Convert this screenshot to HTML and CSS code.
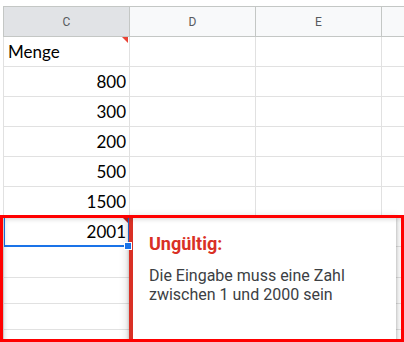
FILE: index.html
```html
<!DOCTYPE html>
<html lang="de">
<head>
    <meta charset="UTF-8">
    <meta name="viewport" content="width=device-width, initial-scale=1.0">
    <title>Datenvalidierung</title>
    <link rel="stylesheet" href="styles.css">
</head>
<body>
    <div class="sheet">
        <div class="row head">
            <div class="cell active">C</div>
            <div class="cell">D</div>
            <div class="cell">E</div>
            <div class="cell"></div>
        </div>
        <div class="row">
            <div class="cell text flag">Menge</div>
            <div class="cell"></div><div class="cell"></div><div class="cell"></div>
        </div>
        <div class="row">
            <div class="cell num">800</div>
            <div class="cell"></div><div class="cell"></div><div class="cell"></div>
        </div>
        <div class="row">
            <div class="cell num">300</div>
            <div class="cell"></div><div class="cell"></div><div class="cell"></div>
        </div>
        <div class="row">
            <div class="cell num">200</div>
            <div class="cell"></div><div class="cell"></div><div class="cell"></div>
        </div>
        <div class="row">
            <div class="cell num">500</div>
            <div class="cell"></div><div class="cell"></div><div class="cell"></div>
        </div>
        <div class="row">
            <div class="cell num">1500</div>
            <div class="cell"></div><div class="cell"></div><div class="cell"></div>
        </div>
        <div class="row">
            <div class="cell num flag invalid selected">2001</div>
            <div class="cell"></div><div class="cell"></div><div class="cell"></div>
        </div>
        <div class="row tall">
            <div class="cell"></div><div class="cell"></div><div class="cell"></div><div class="cell"></div>
        </div>
        <div class="row short">
            <div class="cell"></div><div class="cell"></div><div class="cell"></div><div class="cell"></div>
        </div>
        <div class="row short">
            <div class="cell"></div><div class="cell"></div><div class="cell"></div><div class="cell"></div>
        </div>
        <div class="row short">
            <div class="cell"></div><div class="cell"></div><div class="cell"></div><div class="cell"></div>
        </div>

        <div class="popup">
            <div class="popup-title">Ungültig:</div>
            <div class="popup-text">Die Eingabe muss eine Zahl<br>zwischen 1 und 2000 sein</div>
        </div>
        <div class="mark"></div>
    </div>
</body>
</html>
```

FILE: styles.css
```css
* {
    box-sizing: border-box;
}
body {
    margin: 0;
    background: #fff;
    overflow: hidden;
}
.sheet {
    position: relative;
    padding: 6px 0 0 3px;
    width: 404px;
    height: 342px;
    overflow: hidden;
}
.row {
    display: flex;
    height: 30px;
    border-left: 1px solid #e1e1e1;
    border-bottom: 1px solid #e1e1e1;
}
.row.tall {
    height: 31px;
}
.row.short {
    height: 26px;
}
.cell {
    flex: none;
    width: 126px;
    height: 100%;
    border-right: 1px solid #e1e1e1;
    font-family: Lato, "Liberation Sans", sans-serif;
    font-size: 17px;
    line-height: 20px;
    color: #000;
}
.head {
    height: 31px;
    background: #f8f9fa;
    border-top: 1px solid #c4c7c5;
    border-bottom: 1px solid #c4c7c5;
    border-left-color: #c4c7c5;
}
.head .cell {
    display: flex;
    align-items: center;
    justify-content: center;
    border-right-color: #c4c7c5;
    font-family: Roboto, "Liberation Sans", sans-serif;
    font-size: 12px;
    color: #575a5e;
}
.head .active {
    background: #e1e3e6;
}
.text, .num {
    display: flex;
    align-items: flex-end;
    padding: 0 3px 4px 4px;
}
.num {
    justify-content: flex-end;
}
.flag {
    position: relative;
}
.flag::after {
    content: "";
    position: absolute;
    top: 0;
    right: 1px;
    border-left: 6px solid transparent;
    border-top: 6px solid #ea4335;
}
.invalid::after {
    border-top-color: #c5221f;
}
.selected::before {
    content: "";
    position: absolute;
    top: -1px;
    left: 0;
    right: -1px;
    bottom: -1px;
    border: 2px solid #1a73e8;
    border-left-width: 1px;
}
.popup {
    position: absolute;
    left: 129px;
    top: 217px;
    width: 267px;
    height: 140px;
    background: #fff;
    border-left: 4px solid #d93025;
    padding: 16px 16px 0 16px;
    box-shadow: 0 0 3px rgba(60, 64, 67, 0.35), 0 2px 8px 2px rgba(60, 64, 67, 0.18);
    font-family: Roboto, "Liberation Sans", sans-serif;
}
.popup::before {
    content: "";
    position: absolute;
    left: -9px;
    top: 25px;
    width: 6px;
    height: 6px;
    background: #1a73e8;
    border: 1px solid #fff;
}
.popup-title {
    font-size: 18px;
    line-height: 22px;
    font-weight: bold;
    color: #d93025;
}
.popup-text {
    margin-top: 11px;
    font-size: 16px;
    line-height: 19px;
    color: #3c4043;
}
.mark {
    position: absolute;
    left: 0;
    top: 215px;
    width: 404px;
    height: 127px;
    border: 3px solid #ff0000;
    box-shadow: inset 3px 3px 5px -2px rgba(0, 0, 0, 0.18);
}
```
